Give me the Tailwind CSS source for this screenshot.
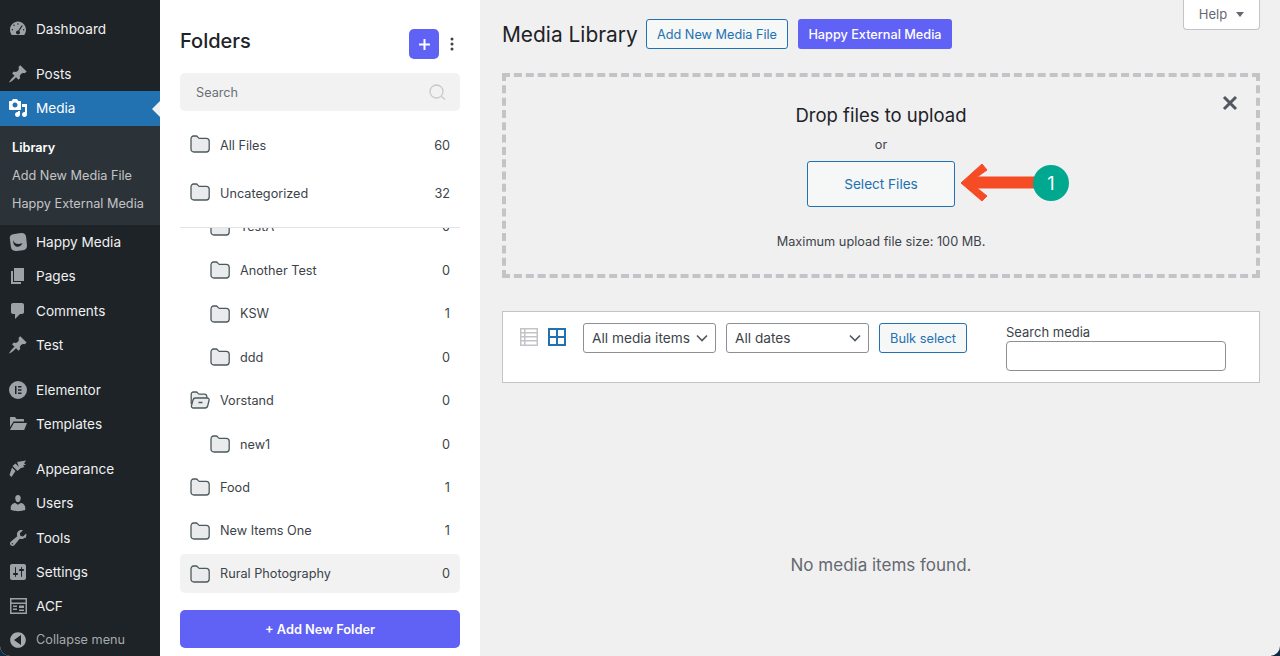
<!DOCTYPE html>
<html lang="en">
<head>
    <meta charset="UTF-8">
    <title>Media Library</title>
    <script src="https://cdn.jsdelivr.net/npm/@tailwindcss/browser@4"></script>
</head>
<body class="bg-[#0f2a44] font-['Inter','Liberation_Sans',sans-serif] overflow-hidden">
    <div class="flex w-[1280px] h-[656px] overflow-hidden rounded-b-[10px] bg-[#f0f0f1]">

        <!-- Admin menu -->
        <nav class="w-[160px] shrink-0 bg-[#1d2327] text-[13.6px] text-[#f0f0f1] pt-3">
            <a class="flex items-center h-[34px]"><svg class="w-5 h-5 ml-[8px] mr-[8px] text-[#9ca2a7]" viewBox="0 0 20 20" fill="currentColor"><path fill-rule="evenodd" d="M3.76 16h12.48c1.1-1.43 1.76-3.21 1.76-5.14C18 6.26 14.42 2.5 10 2.5S2 6.26 2 10.86c0 1.93.66 3.71 1.76 5.14zM10 4.26c.42 0 .76.34.76.76s-.34.76-.76.76-.76-.34-.76-.76.34-.76.76-.76zM6 5.5c.42 0 .76.34.76.76S6.42 7.02 6 7.02s-.76-.34-.76-.76S5.58 5.5 6 5.5zm8.32.56c.35.23.45.7.22 1.05l-3.22 4.85c.4.38.68.93.68 1.54 0 1.1-.9 2-2 2s-2-.9-2-2 .9-2 2-2c.11 0 .22 0 .33.02l3.02-4.75c.23-.35.7-.45 1.05-.22zM4.38 10.1c.42 0 .76.34.76.76s-.34.76-.76.76-.76-.34-.76-.76.34-.76.76-.76zm11.24 0c.42 0 .76.34.76.76s-.34.76-.76.76-.76-.34-.76-.76.34-.76.76-.76z"/></svg>Dashboard</a>

            <a class="flex items-center h-[34px] mt-[11px]"><svg class="w-5 h-5 ml-[8px] mr-[8px] text-[#9ca2a7]" viewBox="0 0 20 20" fill="currentColor"><path d="M10.44 3.02l1.82-1.82 6.36 6.35-1.83 1.82c-1.05-.68-2.48-.57-3.41.36l-.75.75c-.92.93-1.04 2.35-.35 3.41l-1.83 1.82-2.41-2.41-2.8 2.79c-.42.42-3.38 2.71-3.8 2.29s1.86-3.39 2.28-3.81l2.79-2.79L4.1 9.36l1.83-1.82c1.05.69 2.48.57 3.4-.36l.75-.75c.93-.92 1.05-2.35.36-3.41z"/></svg>Posts</a>

            <a class="relative flex items-center h-[35px] pb-[1px] bg-[#2271b1] text-white"><svg class="w-5 h-5 ml-[8px] mr-[8px]" viewBox="0 0 20 20" fill="currentColor"><path fill-rule="evenodd" d="M13 11V4c0-.55-.45-1-1-1h-1.67L9 1H5L3.67 3H2c-.55 0-1 .45-1 1v7c0 .55.45 1 1 1h10c.55 0 1-.45 1-1zM7 4.5c1.38 0 2.5 1.12 2.5 2.5S8.38 9.5 7 9.5 4.5 8.38 4.5 7 5.62 4.5 7 4.5zM14 6h5v10.5c0 1.38-1.12 2.5-2.5 2.5S14 17.88 14 16.5s1.12-2.5 2.5-2.5c.17 0 .34.02.5.05V9h-3V6zm-4 8.05V13h2v3.5c0 1.38-1.12 2.5-2.5 2.5S7 17.88 7 16.5 8.12 14 9.5 14c.17 0 .34.02.5.05z"/></svg>Media<span class="absolute right-0 top-[10px] border-y-[8px] border-r-[8px] border-y-transparent border-r-[#f0f0f1]"></span></a>

            <div class="bg-[#2c3338] h-[99px] pt-[8px] text-[12.7px] text-[#c3c4c7]">
                <a class="flex items-center h-[28px] pl-3 font-semibold text-white">Library</a>
                <a class="flex items-center h-[28px] pl-3">Add New Media File</a>
                <a class="flex items-center h-[28px] pl-3">Happy External Media</a>
            </div>

            <a class="flex items-center h-[34px]"><svg class="w-5 h-5 ml-[8px] mr-[8px] text-[#9ca2a7]" viewBox="0 0 20 20"><path fill="currentColor" d="M5 2.2 12.8 1c3-.4 5 1.3 5.3 3.8l.9 8.6c.2 2.6-1.4 4.5-4 4.9l-6.5.7c-3 .2-5.3-1.4-5.6-4.1L1.8 6.2C1.6 4 3 2.500 5 2.200z"/><path d="M5 8c1 3.500 5 5.500 9.500 3-1 3-4 4.500-6.500 3.500C6 13.500 5 11 5 8z" fill="#1d2327"/></svg>Happy Media</a>
            <a class="flex items-center h-[35px] pb-[1px]"><svg class="w-5 h-5 ml-[8px] mr-[8px] text-[#9ca2a7]" viewBox="0 0 20 20" fill="currentColor"><path d="M6 15V2h10v13H6zm-1 1h8v2H3V5h2v11z"/></svg>Pages</a>
            <a class="flex items-center h-[34px]"><svg class="w-5 h-5 ml-[8px] mr-[8px] text-[#9ca2a7]" viewBox="0 0 20 20" fill="currentColor"><path d="M5 2h9c1.100 0 2 .9 2 2v7c0 1.100-.9 2-2 2h-2l-5 5v-5H5c-1.100 0-2-.9-2-2V4c0-1.100.9-2 2-2z"/></svg>Comments</a>
            <a class="flex items-center h-[35px] pb-[1px]"><svg class="w-5 h-5 ml-[8px] mr-[8px] text-[#9ca2a7]" viewBox="0 0 20 20" fill="currentColor"><path d="M10.44 3.02l1.82-1.82 6.36 6.35-1.83 1.82c-1.05-.68-2.48-.57-3.41.36l-.75.75c-.92.93-1.04 2.35-.35 3.41l-1.83 1.82-2.41-2.41-2.8 2.79c-.42.42-3.38 2.71-3.8 2.29s1.86-3.39 2.28-3.81l2.79-2.79L4.1 9.36l1.83-1.82c1.05.69 2.48.57 3.4-.36l.75-.75c.93-.92 1.05-2.35.36-3.41z"/></svg>Test</a>

            <a class="flex items-center h-[34px] mt-[10px]"><svg class="w-5 h-5 ml-[8px] mr-[8px] text-[#9ca2a7]" viewBox="0 0 20 20" fill="currentColor"><path fill-rule="evenodd" d="M10 1a9 9 0 1 0 0 18 9 9 0 0 0 0-18zM7 6h1.500v8H7zM10 6h3.500v1.500H10zM10 9.250h3.500v1.500H10zM10 12.500h3.500V14H10z"/></svg>Elementor</a>
            <a class="flex items-center h-[35px] pb-[1px]"><svg class="w-5 h-5 ml-[8px] mr-[8px] text-[#9ca2a7]" viewBox="0 0 20 20" fill="currentColor"><path d="M2 4c0-.6.400-1 1-1h4l1.500 2H15c.6 0 1 .4 1 1v1.500H5.500L2 13zM5.800 9H19l-2.800 7H2z"/></svg>Templates</a>

            <a class="flex items-center h-[34px] mt-[10px]"><svg class="w-5 h-5 ml-[8px] mr-[8px] text-[#9ca2a7]" viewBox="0 0 20 20" fill="currentColor"><path d="M9 3l9-1.500-2 3 2 1-3 1 1.500 1.500-5 1.500zM7.500 4.500l5 5-2 1.500-1 1-5-5zM4 8.500l3.500 3.500L3.500 18 1.500 16z"/></svg>Appearance</a>
            <a class="flex items-center h-[35px] pb-[1px]"><svg class="w-5 h-5 ml-[8px] mr-[8px] text-[#9ca2a7]" viewBox="0 0 20 20" fill="currentColor"><path d="M10 9.25c-2.27 0-2.73-3.44-2.73-3.44C7 4.020 7.820 2 9.970 2c2.160 0 2.980 2.020 2.710 3.810 0 0-.46 3.440-2.680 3.440zm0 2.570L12.720 10c2.390 0 4.520 2.330 4.520 4.530v2.490s-3.650 1.130-7.240 1.130c-3.650 0-7.240-1.130-7.240-1.130v-2.490c0-2.250 1.940-4.480 4.470-4.480z"/></svg>Users</a>
            <a class="flex items-center h-[34px]"><svg class="w-5 h-5 ml-[8px] mr-[8px] text-[#9ca2a7]" viewBox="0 0 20 20" fill="currentColor"><path fill-rule="evenodd" d="M16.680 9.770c-1.340 1.340-3.300 1.670-4.950.99l-5.410 6.520c-.99.99-2.590.99-3.580 0s-.99-2.590 0-3.570l6.520-5.420c-.68-1.650-.35-3.610.99-4.950 1.280-1.280 3.120-1.640 4.720-1.080l-3.100 3.100.58 2.590 2.590.58 3.100-3.100c.57 1.600.21 3.450-1.060 4.720zM3.810 16.180c.27.27.71.27.99 0 .27-.27.27-.71 0-.99-.28-.27-.72-.27-.99 0-.28.28-.28.72 0 .99z"/></svg>Tools</a>
            <a class="flex items-center h-[35px] pb-[1px]"><svg class="w-5 h-5 ml-[8px] mr-[8px] text-[#9ca2a7]" viewBox="0 0 20 20" fill="currentColor"><path fill-rule="evenodd" d="M18 16V4c0-1.100-.9-2-2-2H4c-1.100 0-2 .9-2 2v12c0 1.100.9 2 2 2h12c1.100 0 2-.9 2-2zM8 11h1c.55 0 1 .45 1 1s-.45 1-1 1H8v1.500c0 .28-.22.5-.5.5s-.5-.22-.5-.5V13H6c-.55 0-1-.45-1-1s.45-1 1-1h1V5.500c0-.28.22-.5.5-.5s.5.22.5.5V11zm5-2h-1c-.55 0-1-.45-1-1s.45-1 1-1h1V5.500c0-.28.22-.5.5-.5s.5.22.5.5V7h1c.55 0 1 .45 1 1s-.45 1-1 1h-1v5.500c0 .28-.22.5-.5.5s-.5-.22-.5-.5V9z"/></svg>Settings</a>
            <a class="flex items-center h-[34px] pb-[2px]"><svg class="w-5 h-5 ml-[8px] mr-[8px] text-[#9ca2a7]" viewBox="0 0 20 20" fill="currentColor"><path fill-rule="evenodd" d="M2 2h17v16H2zM3.500 3.500v3h14v-3zM3.500 8v8.500h14V8zM5 9.500h4V11H5zM11 9.500h5v2.500h-5zM5 12.500h4V14H5zM11 13.500h5V15h-5z"/></svg>ACF</a>
            <a class="flex items-center h-[33px] pb-[2px] text-[12.7px] text-[#a7aaad]"><svg class="w-5 h-5 ml-[8px] mr-[8px] text-[#a7aaad]" viewBox="0 0 20 20" fill="currentColor"><path fill-rule="evenodd" d="M10 2.160c4.330 0 7.840 3.510 7.840 7.840s-3.510 7.840-7.840 7.840S2.160 14.330 2.160 10 5.670 2.160 10 2.160zM13 15V5l-7 5z"/></svg>Collapse menu</a>
        </nav>

        <!-- Folder panel -->
        <aside class="w-[320px] shrink-0 bg-white px-5 flex flex-col text-[#3c434a]">
            <div class="flex items-center justify-between h-[73px] pt-[15px]">
                <h2 class="text-[20px] font-medium text-[#1d2327] leading-none -mt-[6px]">Folders</h2>
                <div class="flex items-center">
                    <button class="w-[30px] h-[30px] rounded-[5px] bg-[#6061f5] flex items-center justify-center"><svg class="w-[11px] h-[11px]" viewBox="0 0 11 11" fill="none" stroke="white" stroke-width="2"><path d="M5.500 0v11M0 5.500h11"/></svg></button>
                    <svg class="w-[4px] h-[14px] ml-[11px] mr-[6px]" viewBox="0 0 4 14" fill="#3c434a"><circle cx="2" cy="2" r="1.500"/><circle cx="2" cy="7" r="1.500"/><circle cx="2" cy="12" r="1.500"/></svg>
                </div>
            </div>
            <div class="flex items-center justify-between h-[38px] rounded-[5px] bg-[#f2f2f3] pl-4 pr-[14px] pt-[1px] text-[12.7px] text-[#6b7075]">
                <span>Search</span>
                <svg class="w-[17px] h-[17px]" viewBox="0 0 17 17" fill="none" stroke="#c6c8ca" stroke-width="1.300"><circle cx="7.500" cy="7.500" r="6.500"/><path d="M12.500 12.500l3.500 3"/></svg>
            </div>

            <div class="text-[12.7px] mt-[10px] flex-1 flex flex-col">
                <div class="flex items-center h-[48px] pt-[2px] pl-[10px] pr-[10px]">
                    <svg class="w-5 h-[18px] mr-[10px] -mt-[4px]" viewBox="0 0 20 18"><path d="M1 4c0-1.800 1-3 2.700-3h2.500c1.200 0 1.800 1.800 3 2.300h7c1.900 0 3 1 3 2.900V14c0 1.800-1 3-3 3H4c-2 0-3-1.200-3-3z" fill="#e9ebec" stroke="#4c5a5e" stroke-width="1.300"/></svg>
                    <span>All Files</span><span class="ml-auto">60</span>
                </div>
                <div class="flex items-center h-[48px] pt-[2px] pl-[10px] pr-[10px]">
                    <svg class="w-5 h-[18px] mr-[10px] -mt-[4px]" viewBox="0 0 20 18"><path d="M1 4c0-1.800 1-3 2.700-3h2.500c1.200 0 1.800 1.800 3 2.300h7c1.900 0 3 1 3 2.900V14c0 1.800-1 3-3 3H4c-2 0-3-1.200-3-3z" fill="#e9ebec" stroke="#4c5a5e" stroke-width="1.300"/></svg>
                    <span>Uncategorized</span><span class="ml-auto">32</span>
                </div>
                <!-- scrolled tree -->
                <div class="h-[368px] mt-[10px] overflow-hidden border-t border-[#e2e3e4]">
                    <div class="-mt-[22.8px]">
                        <div class="flex items-center h-[43.4px] pl-[30px] pr-[10px]">
                            <svg class="w-5 h-[18px] mr-[10px]" viewBox="0 0 20 18"><path d="M1 4c0-1.800 1-3 2.700-3h2.500c1.200 0 1.800 1.800 3 2.300h7c1.900 0 3 1 3 2.900V14c0 1.800-1 3-3 3H4c-2 0-3-1.200-3-3z" fill="#e9ebec" stroke="#4c5a5e" stroke-width="1.300"/></svg>
                            <span>TestA</span><span class="ml-auto">0</span>
                        </div>
                        <div class="flex items-center h-[43.4px] pl-[30px] pr-[10px]">
                            <svg class="w-5 h-[18px] mr-[10px]" viewBox="0 0 20 18"><path d="M1 4c0-1.800 1-3 2.700-3h2.500c1.200 0 1.800 1.800 3 2.300h7c1.900 0 3 1 3 2.900V14c0 1.800-1 3-3 3H4c-2 0-3-1.200-3-3z" fill="#e9ebec" stroke="#4c5a5e" stroke-width="1.300"/></svg>
                            <span>Another Test</span><span class="ml-auto">0</span>
                        </div>
                        <div class="flex items-center h-[43.4px] pl-[30px] pr-[10px]">
                            <svg class="w-5 h-[18px] mr-[10px]" viewBox="0 0 20 18"><path d="M1 4c0-1.800 1-3 2.700-3h2.500c1.200 0 1.800 1.800 3 2.300h7c1.900 0 3 1 3 2.900V14c0 1.800-1 3-3 3H4c-2 0-3-1.200-3-3z" fill="#e9ebec" stroke="#4c5a5e" stroke-width="1.300"/></svg>
                            <span>KSW</span><span class="ml-auto">1</span>
                        </div>
                        <div class="flex items-center h-[43.4px] pl-[30px] pr-[10px]">
                            <svg class="w-5 h-[18px] mr-[10px]" viewBox="0 0 20 18"><path d="M1 4c0-1.800 1-3 2.700-3h2.500c1.200 0 1.800 1.800 3 2.300h7c1.900 0 3 1 3 2.900V14c0 1.800-1 3-3 3H4c-2 0-3-1.200-3-3z" fill="#e9ebec" stroke="#4c5a5e" stroke-width="1.300"/></svg>
                            <span>ddd</span><span class="ml-auto">0</span>
                        </div>
                        <div class="flex items-center h-[43.4px] pl-[10px] pr-[10px]">
                            <svg class="w-5 h-[18px] mr-[10px]" viewBox="0 0 20 18"><path d="M1.200 13V3.500C1.200 2 2 1 3.500 1h2.700c1.200 0 1.800 1.700 3 2.200h5.300c1.500 0 2.300.8 2.300 2.300V7" fill="#e9ebec" stroke="#4c5a5e" stroke-width="1.300"/><path d="M1.500 14.500 3 9c.3-1.200 1.200-2 2.500-2H17c1.500 0 2.400 1 2 2.500l-1.200 5c-.3 1.500-1.300 2.500-2.800 2.500H3.500c-1.500 0-2.400-1-2-2.500z" fill="#e9ebec" stroke="#4c5a5e" stroke-width="1.300"/><path d="M8.500 11.500h4" stroke="#4c5a5e" stroke-width="1.500"/></svg>
                            <span>Vorstand</span><span class="ml-auto">0</span>
                        </div>
                        <div class="flex items-center h-[43.4px] pt-[1px] pl-[30px] pr-[10px]">
                            <svg class="w-5 h-[18px] mr-[10px]" viewBox="0 0 20 18"><path d="M1 4c0-1.800 1-3 2.700-3h2.500c1.200 0 1.800 1.800 3 2.300h7c1.900 0 3 1 3 2.900V14c0 1.800-1 3-3 3H4c-2 0-3-1.200-3-3z" fill="#e9ebec" stroke="#4c5a5e" stroke-width="1.300"/></svg>
                            <span>new1</span><span class="ml-auto">0</span>
                        </div>
                        <div class="flex items-center h-[43.4px] pl-[10px] pr-[10px]">
                            <svg class="w-5 h-[18px] mr-[10px]" viewBox="0 0 20 18"><path d="M1 4c0-1.800 1-3 2.700-3h2.500c1.200 0 1.800 1.800 3 2.300h7c1.900 0 3 1 3 2.900V14c0 1.800-1 3-3 3H4c-2 0-3-1.200-3-3z" fill="#e9ebec" stroke="#4c5a5e" stroke-width="1.300"/></svg>
                            <span>Food</span><span class="ml-auto">1</span>
                        </div>
                        <div class="flex items-center h-[43.4px] pl-[10px] pr-[10px]">
                            <svg class="w-5 h-[18px] mr-[10px]" viewBox="0 0 20 18"><path d="M1 4c0-1.800 1-3 2.700-3h2.500c1.200 0 1.800 1.800 3 2.300h7c1.900 0 3 1 3 2.900V14c0 1.800-1 3-3 3H4c-2 0-3-1.200-3-3z" fill="#e9ebec" stroke="#4c5a5e" stroke-width="1.300"/></svg>
                            <span>New Items One</span><span class="ml-auto">1</span>
                        </div>
                        <div class="flex items-center h-[39px] mt-[2px] pl-[10px] pr-[10px] rounded-[5px] bg-[#f2f2f3]">
                            <svg class="w-5 h-[18px] mr-[10px]" viewBox="0 0 20 18"><path d="M1 4c0-1.800 1-3 2.700-3h2.500c1.200 0 1.800 1.800 3 2.300h7c1.900 0 3 1 3 2.900V14c0 1.800-1 3-3 3H4c-2 0-3-1.200-3-3z" fill="#e9ebec" stroke="#4c5a5e" stroke-width="1.300"/></svg>
                            <span>Rural Photography</span><span class="ml-auto">0</span>
                        </div>
                    </div>
                </div>
                <button class="h-[38px] pt-[1px] rounded-[5px] bg-[#6061f5] text-white font-semibold text-[12.8px] mt-[15px] shrink-0">+ Add New Folder</button>
            </div>
        </aside>

        <!-- Main content -->
        <main class="relative flex-1 pl-[22px] pr-5 text-[#3c434a]">
            <div class="absolute right-5 top-0 w-[77px] h-[30px] bg-white border border-t-0 border-[#c3c4c7] rounded-b-[4px] flex items-center justify-center text-[13px] text-[#646970]">Help<span class="ml-[9px] border-x-[4px] border-t-[5px] border-x-transparent border-t-[#646970]"></span></div>

            <div class="flex items-start h-[73px] pt-[19px]">
                <h1 class="text-[20.9px] text-[#1d2327] leading-[31px] w-[135px] whitespace-nowrap">Media Library</h1>
                <a class="ml-[9px] w-[142px] h-[30px] pt-[1px] flex items-center justify-center border border-[#2271b1] rounded-[3px] bg-[#f6f7f7] text-[12.7px] text-[#2271b1]">Add New Media File</a>
                <a class="ml-[10px] w-[154px] h-[30px] pt-[1px] flex items-center justify-center rounded-[3px] bg-[#6061f5] text-[12.7px] text-white font-medium">Happy External Media</a>
            </div>

            <div class="relative h-[205px] border-[4px] border-dashed border-[#c3c4c7] flex flex-col items-center">
                <button class="absolute right-[18px] top-[18px]"><svg class="w-4 h-4" viewBox="0 0 16 16" stroke="#50575e" stroke-width="3" fill="none"><path d="M2 2l12 12M14 2L2 14"/></svg></button>
                <p class="text-[18.5px] text-[#1d2327] leading-none mt-[29px]">Drop files to upload</p>
                <p class="text-[12.75px] leading-none mt-[14px]">or</p>
                <div class="relative mt-[9.5px]">
                    <button class="w-[148px] h-[46px] rounded-[3px] border border-[#2271b1] bg-[#f6f7f7] text-[13.6px] text-[#2271b1]">Select Files</button>
                    <!-- callout arrow over the page -->
                    <svg class="absolute left-[154px] top-[1px] w-[110px] h-[44px]" viewBox="0 0 110 44"><path d="M0 21 21 2 26 8 16 15H76V26H16L26 34 21 39z" fill="#f64c25" stroke="#f64c25" stroke-linejoin="round"/><circle cx="90" cy="21" r="18" fill="#00a88f"/><text x="90" y="27.500" text-anchor="middle" font-size="18" font-weight="400" fill="white" font-family="Inter">1</text></svg>
                </div>
                <p class="text-[12.75px] leading-none mt-[29px]">Maximum upload file size: 100 MB.</p>
            </div>

            <div class="flex items-start h-[72px] mt-[33px] bg-white border border-[#c3c4c7] pl-[17px] pt-[11px]">
                <svg class="w-[18px] h-[18px] mt-[5px]" viewBox="0 0 18 18" fill="#c3c4c7"><path fill-rule="evenodd" d="M0 0h18v18H0zM1.500 1.500V4H4V1.500zM5.500 1.500V4h11V1.500zM1.500 5.500V8H4V5.500zM5.500 5.500V8h11V5.500zM1.500 9.500V12H4V9.500zM5.500 9.500V12h11V9.500zM1.500 13.500v3H4v-3zM5.500 13.500v3h11v-3z"/></svg>
                <svg class="w-[18px] h-[18px] mt-[5px] ml-[10px]" viewBox="0 0 18 18" fill="#2271b1"><path fill-rule="evenodd" d="M0 0h18v18H0zM2 2v6h6V2zM10 2v6h6V2zM2 10v6h6v-6zM10 10v6h6v-6z"/></svg>
                <div class="ml-[17px] w-[133px] h-[30px] flex items-center justify-between pl-2 pr-[7px] rounded-[3px] border border-[#8c8f94] bg-white text-[13.7px]">All media items<svg class="w-[12px] h-[8px]" viewBox="0 0 12 8" fill="none" stroke="#50575e" stroke-width="1.600"><path d="M1 1.500l5 5 5-5"/></svg></div>
                <div class="ml-[10px] w-[143px] h-[30px] flex items-center justify-between pl-2 pr-[7px] rounded-[3px] border border-[#8c8f94] bg-white text-[13.7px]">All dates<svg class="w-[12px] h-[8px]" viewBox="0 0 12 8" fill="none" stroke="#50575e" stroke-width="1.600"><path d="M1 1.500l5 5 5-5"/></svg></div>
                <button class="ml-[10px] w-[88px] h-[30px] pt-[1px] rounded-[3px] border border-[#2271b1] bg-[#f6f7f7] text-[12.8px] text-[#2271b1]">Bulk select</button>
                <div class="ml-[39px] mt-[1px]">
                    <p class="text-[13px] leading-[17px]">Search media</p>
                    <div class="w-[220px] h-[30px] rounded-[4px] border border-[#8c8f94] bg-white"></div>
                </div>
            </div>

            <p class="text-center text-[17px] text-[#646970] mt-[170px]">No media items found.</p>
        </main>
    </div>
</body>
</html>
